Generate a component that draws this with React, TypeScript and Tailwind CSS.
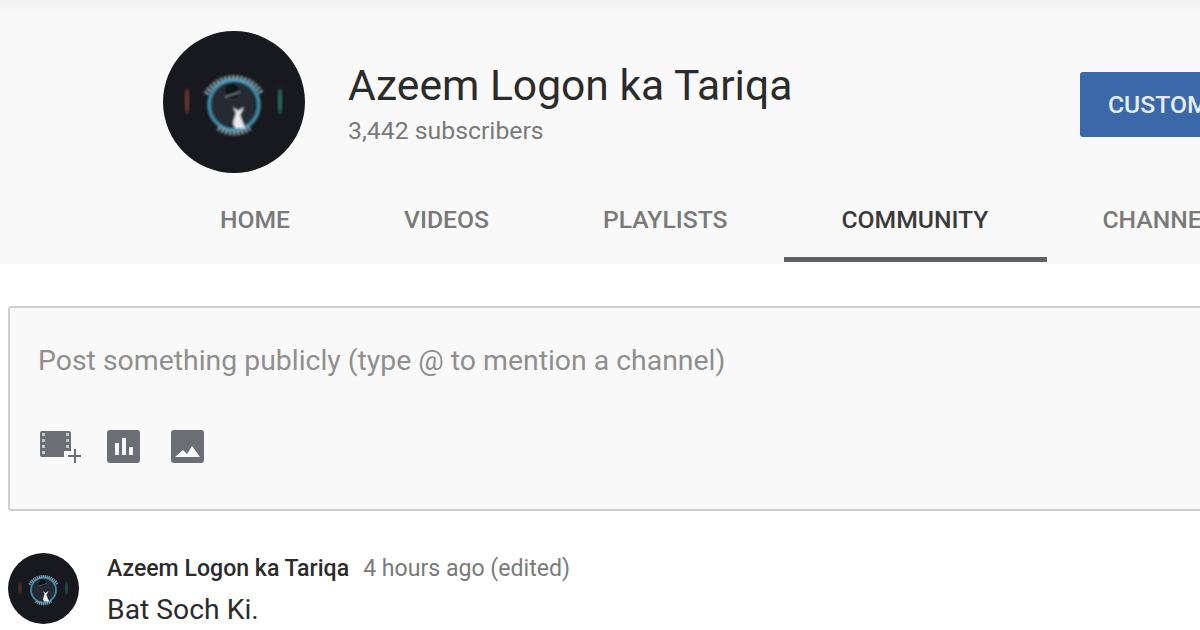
import React from 'react';

const font = "font-['Roboto','Liberation_Sans',sans-serif]";

// blurry channel logo, same drawing for both sizes
const Logo = ({ size }: { size: number }) => (
    <svg width={size} height={size} viewBox="0 0 142 142" className="shrink-0">
        <defs>
            <filter id="soft"><feGaussianBlur stdDeviation="1.8" /></filter>
            <filter id="softer"><feGaussianBlur stdDeviation="0.8" /></filter>
        </defs>
        <circle cx="71" cy="71" r="71" fill="#17191e" />
        <ellipse cx="24" cy="70" rx="2" ry="13" fill="#9c4a35" opacity="0.75" filter="url(#soft)" />
        <ellipse cx="117" cy="70" rx="2" ry="13" fill="#2f8f72" opacity="0.8" filter="url(#soft)" />
        <g filter="url(#softer)">
            <circle cx="71" cy="74" r="25" fill="#262c33" stroke="#3d8cab" strokeWidth="3.5" />
            <path d="M43 63 A32 32 0 0 1 99 63" fill="none" stroke="#a9cbd8" strokeWidth="5" strokeDasharray="2.5 1.5" opacity="0.75" />
            <path d="M55 97 A28 28 0 0 0 87 97" fill="none" stroke="#a9cbd8" strokeWidth="5" strokeDasharray="2.5 1.5" opacity="0.75" />
            <ellipse cx="69" cy="60" rx="7" ry="7" fill="#101216" />
            <path d="M62 66 L77 61" stroke="#9a9fa4" strokeWidth="1" />
            <path d="M70 92 L73 82 L70 76 L75 80 L81 76 L77 84 L82 97 L72 97 Z" fill="#e8ecee" />
        </g>
    </svg>
);

const FilmIcon = () => (
    <svg width="42" height="34" viewBox="0 0 42 34">
        <rect x="0" y="0" width="31" height="26" rx="2" fill="#6b6f74" />
        <g fill="#c4c6c9">
            <rect x="2" y="2" width="3" height="3" /><rect x="2" y="8" width="3" height="3" />
            <rect x="2" y="14" width="3" height="3" /><rect x="2" y="20" width="3" height="3" />
            <rect x="26" y="2" width="3" height="3" /><rect x="26" y="8" width="3" height="3" />
            <rect x="26" y="14" width="3" height="3" /><rect x="26" y="20" width="3" height="3" />
        </g>
        <rect x="24" y="20" width="18" height="14" fill="#f9f9f9" />
        <path d="M35 18v14M28 25h13" stroke="#6b6f74" strokeWidth="2" fill="none" />
    </svg>
);

const PollIcon = () => (
    <svg width="33" height="33" viewBox="0 0 33 33">
        <rect width="33" height="33" rx="3" fill="#6b6f74" />
        <path d="M8 13h4v12H8zM15 8h4v17h-4zM22 17h4v8h-4z" fill="#f9f9f9" />
    </svg>
);

const ImageIcon = () => (
    <svg width="33" height="33" viewBox="0 0 33 33">
        <rect width="33" height="33" rx="3" fill="#6b6f74" />
        <path d="M4 27 L12 20 L16 24 L21 16 L29 27 Z" fill="#f9f9f9" />
    </svg>
);

const tabs = [
    { label: 'HOME', cls: 'px-[57px] border-transparent text-[#7a7a7a]' },
    { label: 'VIDEOS', cls: 'px-[57px] border-transparent text-[#7a7a7a]' },
    { label: 'PLAYLISTS', cls: 'px-[57px] border-transparent text-[#7a7a7a]' },
    { label: 'COMMUNITY', cls: 'pl-[57px] pr-[59px] border-[#5e6267] text-[#3a3a3a]' },
    { label: 'CHANNELS', cls: '-ml-[2px] px-[57px] border-transparent text-[#7a7a7a]' },
];

export default function App() {
    return (
        <div className={`w-[1200px] h-[630px] overflow-hidden bg-white ${font}`}>
            {/* Channel header */}
            <div className="h-[264px] bg-[#f9f9f9] bg-gradient-to-b from-[#f1f1f1] to-[#f9f9f9] bg-[length:100%_14px] bg-no-repeat pt-[31px] flex flex-col">
                <div className="flex items-start pl-[163px] h-[142px]">
                    <Logo size={142} />
                    <div className="ml-[43px] mt-[30px] w-[732px] shrink-0">
                        <div className="text-[42.6px] leading-[48px] text-[#2b2b2b] whitespace-nowrap">Azeem Logon ka Tariqa</div>
                        <div className="text-[24.8px] leading-[30px] mt-[7px] text-[#7a7a7a] whitespace-nowrap">3,442 subscribers</div>
                    </div>
                    <div className="mt-[41px] h-[65px] w-[300px] shrink-0 rounded-[3px] bg-[#3a68a8] pl-[28px] flex items-center text-[24.7px] font-medium text-[#e4edf5] whitespace-nowrap overflow-hidden">
                        CUSTOMIZE CHANNEL
                    </div>
                </div>
                <div className="flex pl-[163px] h-[88px] mt-[3px] overflow-hidden">
                    {tabs.map(t => (
                        <div key={t.label} className={`shrink-0 h-[86px] pt-[6px] flex items-center justify-center whitespace-nowrap text-[24.7px] font-medium border-b-[5px] ${t.cls}`}>
                            {t.label}
                        </div>
                    ))}
                </div>
            </div>

            {/* Post composer */}
            <div className="pl-[8px] pt-[42px]">
                <div className="w-[1250px] h-[205px] bg-[#f9f9f9] border-2 border-[#cfcfcf] rounded-[3px] pl-[28px] pt-[35px]">
                    <div className="text-[28.4px] leading-[36px] text-[#8f8f8f] whitespace-nowrap">Post something publicly (type @ to mention a channel)</div>
                    <div className="flex items-start mt-[52px] ml-[2px]">
                        <FilmIcon />
                        <div className="ml-[25px] -mt-px"><PollIcon /></div>
                        <div className="ml-[31px] -mt-px"><ImageIcon /></div>
                    </div>
                </div>
            </div>

            {/* Post */}
            <div className="flex pl-[8px] pt-[42px]">
                <Logo size={71} />
                <div className="ml-[28px] pt-px">
                    <div className="flex items-baseline whitespace-nowrap">
                        <span className="text-[23.1px] leading-[30px] font-medium text-[#2b2b2b]">Azeem Logon ka Tariqa</span>
                        <span className="text-[23.1px] leading-[30px] ml-[14px] text-[#7a7a7a]">4 hours ago (edited)</span>
                    </div>
                    <div className="text-[28.3px] leading-[34px] mt-[9px] text-[#2b2b2b]">Bat Soch Ki.</div>
                </div>
            </div>
        </div>
    );
}
